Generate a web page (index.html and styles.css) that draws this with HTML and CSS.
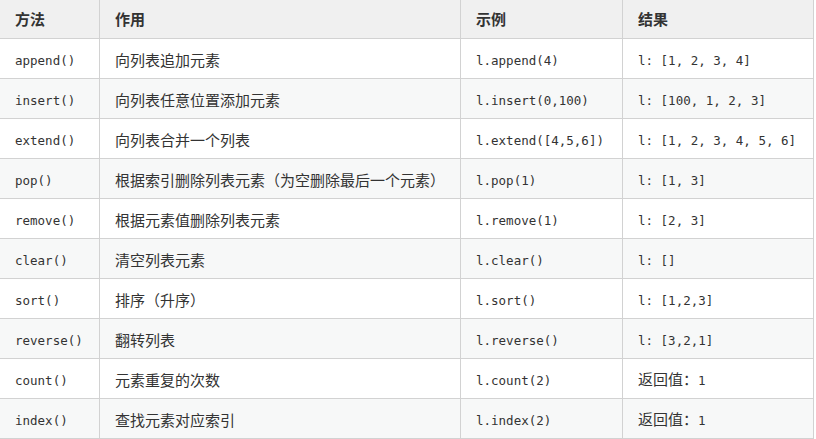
FILE: index.html
```html
<!DOCTYPE html>
<html lang="zh-CN">
<head>
<meta charset="utf-8">
<link rel="stylesheet" href="styles.css">
</head>
<body>
<table class="methods">
  <colgroup>
    <col class="c1"><col class="c2"><col class="c3"><col class="c4">
  </colgroup>
  <thead>
    <tr><th>方法</th><th>作用</th><th>示例</th><th>结果</th></tr>
  </thead>
  <tbody>
    <tr><td><code>append()</code></td><td>向列表追加元素</td><td><code>l.append(4)</code></td><td><code>l: [1, 2, 3, 4]</code></td></tr>
    <tr><td><code>insert()</code></td><td>向列表任意位置添加元素</td><td><code>l.insert(0,100)</code></td><td><code>l: [100, 1, 2, 3]</code></td></tr>
    <tr><td><code>extend()</code></td><td>向列表合并一个列表</td><td><code>l.extend([4,5,6])</code></td><td><code>l: [1, 2, 3, 4, 5, 6]</code></td></tr>
    <tr><td><code>pop()</code></td><td>根据索引删除列表元素（为空删除最后一个元素）</td><td><code>l.pop(1)</code></td><td><code>l: [1, 3]</code></td></tr>
    <tr><td><code>remove()</code></td><td>根据元素值删除列表元素</td><td><code>l.remove(1)</code></td><td><code>l: [2, 3]</code></td></tr>
    <tr><td><code>clear()</code></td><td>清空列表元素</td><td><code>l.clear()</code></td><td><code>l: []</code></td></tr>
    <tr><td><code>sort()</code></td><td>排序（升序）</td><td><code>l.sort()</code></td><td><code>l: [1,2,3]</code></td></tr>
    <tr><td><code>reverse()</code></td><td>翻转列表</td><td><code>l.reverse()</code></td><td><code>l: [3,2,1]</code></td></tr>
    <tr><td><code>count()</code></td><td>元素重复的次数</td><td><code>l.count(2)</code></td><td>返回值：<code>1</code></td></tr>
    <tr><td><code>index()</code></td><td>查找元素对应索引</td><td><code>l.index(2)</code></td><td>返回值：<code>1</code></td></tr>
  </tbody>
</table>
</body>
</html>
```
FILE: styles.css
```css
html, body {
  margin: 0;
  padding: 0;
  background: #fff;
}
body {
  font-family: "Noto Sans CJK SC", "Noto Sans", sans-serif;
  font-size: 15px;
  color: #333;
  overflow: hidden;
}
.methods {
  border-collapse: collapse;
  table-layout: fixed;
  width: 814px;
  margin: -1px 0 0 -1px;
}
.c1 { width: 100px; }
.c2 { width: 361px; }
.c3 { width: 162px; }
.c4 { width: 191px; }
.methods th,
.methods td {
  border: 1px solid #d2d2d2;
  padding: 0 15px;
  text-align: left;
  white-space: nowrap;
  line-height: 20px;
}
.methods th {
  height: 38px;
  background: #f0f0f0;
  font-weight: bold;
  color: #333;
}
.methods td {
  height: 37px;
  padding-top: 2px;
  padding-bottom: 0;
}
.methods tbody tr:nth-child(even) td {
  background: #f7f8f8;
}
.methods code {
  font-family: "DejaVu Sans Mono", "Liberation Mono", monospace;
  font-size: 12.5px;
  color: #333;
}
```
